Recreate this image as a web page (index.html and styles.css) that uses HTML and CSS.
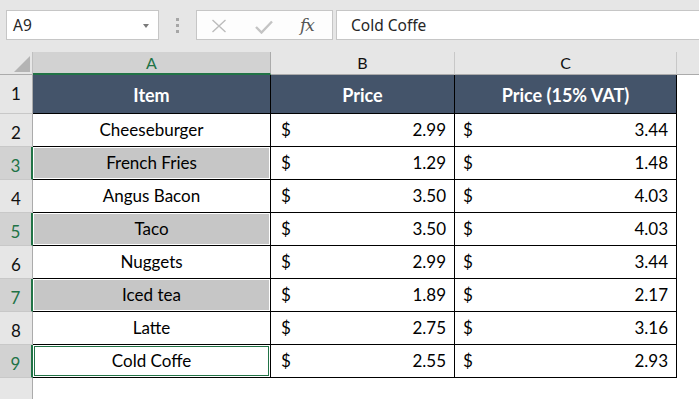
FILE: index.html
```html
<!DOCTYPE html>
<html lang="en">
<head>
<meta charset="utf-8">
<title>Sheet</title>
<link rel="stylesheet" href="styles.css">
</head>
<body>
<div class="app">
  <div class="toolbar">
    <div class="namebox">
      <span class="namebox-text">A9</span>
      <span class="caret"></span>
    </div>
    <div class="grip"><span></span><span></span><span></span></div>
    <div class="fxbox">
      <svg class="ico-x" width="16" height="14" viewBox="0 0 16 14"><path d="M1.5 1 L14.5 13 M14.5 1 L1.5 13" stroke="#bcbcbc" stroke-width="1.4" fill="none"/></svg>
      <svg class="ico-check" width="18" height="14" viewBox="0 0 18 14"><path d="M1 7 L6.5 12.5 L17 1.5" stroke="#c4c4c4" stroke-width="2.4" fill="none"/></svg>
      <span class="fx">fx</span>
    </div>
    <div class="formula"><span class="formula-text">Cold Coffe</span></div>
  </div>

  <div class="sheet">
    <div class="corner"><span class="tri"></span></div>
    <div class="colhead sel">A</div>
    <div class="colhead">B</div>
    <div class="colhead">C</div>
    <div class="colhead filler"></div>

    <div class="rowhead">1</div>
    <div class="cell th">Item</div>
    <div class="cell th">Price</div>
    <div class="cell th">Price (15% VAT)</div>
    <div class="blank"></div>

    <div class="rowhead">2</div>
    <div class="cell item">Cheeseburger</div>
    <div class="cell money b"><span>$</span><span>2.99</span></div>
    <div class="cell money c"><span>$</span><span>3.44</span></div>
    <div class="blank"></div>

    <div class="rowhead sel">3</div>
    <div class="cell item shaded">French Fries</div>
    <div class="cell money b"><span>$</span><span>1.29</span></div>
    <div class="cell money c"><span>$</span><span>1.48</span></div>
    <div class="blank"></div>

    <div class="rowhead">4</div>
    <div class="cell item">Angus Bacon</div>
    <div class="cell money b"><span>$</span><span>3.50</span></div>
    <div class="cell money c"><span>$</span><span>4.03</span></div>
    <div class="blank"></div>

    <div class="rowhead sel">5</div>
    <div class="cell item shaded">Taco</div>
    <div class="cell money b"><span>$</span><span>3.50</span></div>
    <div class="cell money c"><span>$</span><span>4.03</span></div>
    <div class="blank"></div>

    <div class="rowhead">6</div>
    <div class="cell item">Nuggets</div>
    <div class="cell money b"><span>$</span><span>2.99</span></div>
    <div class="cell money c"><span>$</span><span>3.44</span></div>
    <div class="blank"></div>

    <div class="rowhead sel">7</div>
    <div class="cell item shaded">Iced tea</div>
    <div class="cell money b"><span>$</span><span>1.89</span></div>
    <div class="cell money c"><span>$</span><span>2.17</span></div>
    <div class="blank"></div>

    <div class="rowhead">8</div>
    <div class="cell item">Latte</div>
    <div class="cell money b"><span>$</span><span>2.75</span></div>
    <div class="cell money c"><span>$</span><span>3.16</span></div>
    <div class="blank"></div>

    <div class="rowhead sel">9</div>
    <div class="cell item active">Cold Coffe</div>
    <div class="cell money b"><span>$</span><span>2.55</span></div>
    <div class="cell money c"><span>$</span><span>2.93</span></div>
    <div class="blank"></div>

    <div class="rowhead last"></div>
    <div class="blank wide"></div>
  </div>
</div>
</body>
</html>
```

FILE: styles.css
```css
* { box-sizing: border-box; }
html, body { margin: 0; padding: 0; background: #fff; }
body { width: 699px; height: 399px; overflow: hidden; }

.app { display: flex; flex-direction: column; height: 399px; }

/* ---------- formula toolbar ---------- */
.toolbar {
  height: 52px;
  background: #e6e6e6;
  display: flex;
  align-items: flex-start;
  padding: 10px 0 0 6px;
  font-family: "Noto Sans", "Open Sans", sans-serif;
  font-size: 15.5px;
  color: #262626;
}
.namebox {
  width: 153px;
  height: 30px;
  background: #fff;
  border: 1px solid #c6c6c6;
  display: flex;
  align-items: center;
  justify-content: space-between;
  padding: 0 9px 0 6px;
}
.namebox-text { line-height: 28px; }
.caret {
  width: 0; height: 0;
  border-left: 3.5px solid transparent;
  border-right: 3.5px solid transparent;
  border-top: 4px solid #7a7a7a;
  margin-top: 1px;
}
.grip {
  width: 37px;
  height: 30px;
  display: flex;
  flex-direction: column;
  align-items: center;
  justify-content: center;
  gap: 3px;
  padding-top: 1px;
}
.grip span { width: 3px; height: 3px; background: #a6a6a6; }
.fxbox {
  width: 137px;
  height: 30px;
  background: #fdfdfd;
  border: 1px solid #c6c6c6;
  display: flex;
  align-items: center;
  padding: 0 0 0 14px;
}
.ico-x { margin-top: 2px; }
.ico-check { margin: 3px 0 0 28px; }
.fx {
  margin-left: 27px;
  font-family: "DejaVu Serif", "Liberation Serif", serif;
  font-style: italic;
  font-size: 17px;
  color: #555;
  letter-spacing: -1px;
}
.formula {
  flex: 1;
  margin-left: 3px;
  height: 30px;
  background: #fff;
  border-top: 1px solid #c6c6c6;
  border-bottom: 1px solid #c6c6c6;
  border-left: 1px solid #c6c6c6;
  padding-left: 14px;
}
.formula-text { line-height: 28px; }

/* ---------- sheet grid ---------- */
.sheet {
  flex: 1;
  display: grid;
  grid-template-columns: 33px 238px 184px 222px 1fr;
  grid-template-rows: 23px 39px repeat(8, 33px) 1fr;
  font-family: Lato, "Carlito", sans-serif;
  font-size: 17px;
  color: #000;
}
.corner {
  background: #e6e6e6;
  border-right: 1px solid #c0c0c0;
  border-bottom: 1px solid #ababab;
  position: relative;
}
.tri {
  position: absolute;
  left: 14px; top: 4px;
  width: 0; height: 0;
  border-left: 16px solid transparent;
  border-bottom: 16px solid #b4b4b4;
}
.colhead {
  background: #e6e6e6;
  border-right: 1px solid #c8c8c8;
  border-bottom: 1px solid #ababab;
  text-align: center;
  font-size: 16px;
  line-height: 22px;
  color: #111;
}
.colhead.sel {
  background: #d2d2d2;
  color: #217346;
  border-right-color: #ababab;
  border-bottom: 2px solid #217346;
}
.colhead.filler { border-right: 0; }

.rowhead {
  background: #e6e6e6;
  border-right: 1px solid #ababab;
  border-bottom: 1px solid #c8c8c8;
  text-align: center;
  font-size: 17px;
  line-height: 32px;
  padding-top: 3px;
  color: #111;
}
.rowhead.sel {
  background: #d2d2d2;
  color: #217346;
  border-right: 2px solid #217346;
}
.rowhead.last { border-bottom: 0; }

.cell {
  border-right: 1px solid #000;
  border-bottom: 1px solid #000;
  line-height: 32px;
  white-space: nowrap;
}
.cell.th {
  background: #44546a;
  color: #fff;
  font-weight: 700;
  font-size: 18px;
  text-align: center;
  line-height: 38px;
  padding-top: 1px;
}
.cell.item { text-align: center; }
.cell.shaded {
  background: #c6c6c6;
  box-shadow: inset 0 0 0 1px #fff;
}
.cell.active {
  box-shadow: inset 0 0 0 1px #fff, inset 0 0 0 2px #217346;
}
.cell.money {
  display: flex;
  justify-content: space-between;
}
.cell.money.b { padding: 0 8px 0 10px; }
.cell.money.c { padding: 0 8px 0 8px; }

.blank { background: #fff; }
.blank.wide { grid-column: 2 / 6; }
```
